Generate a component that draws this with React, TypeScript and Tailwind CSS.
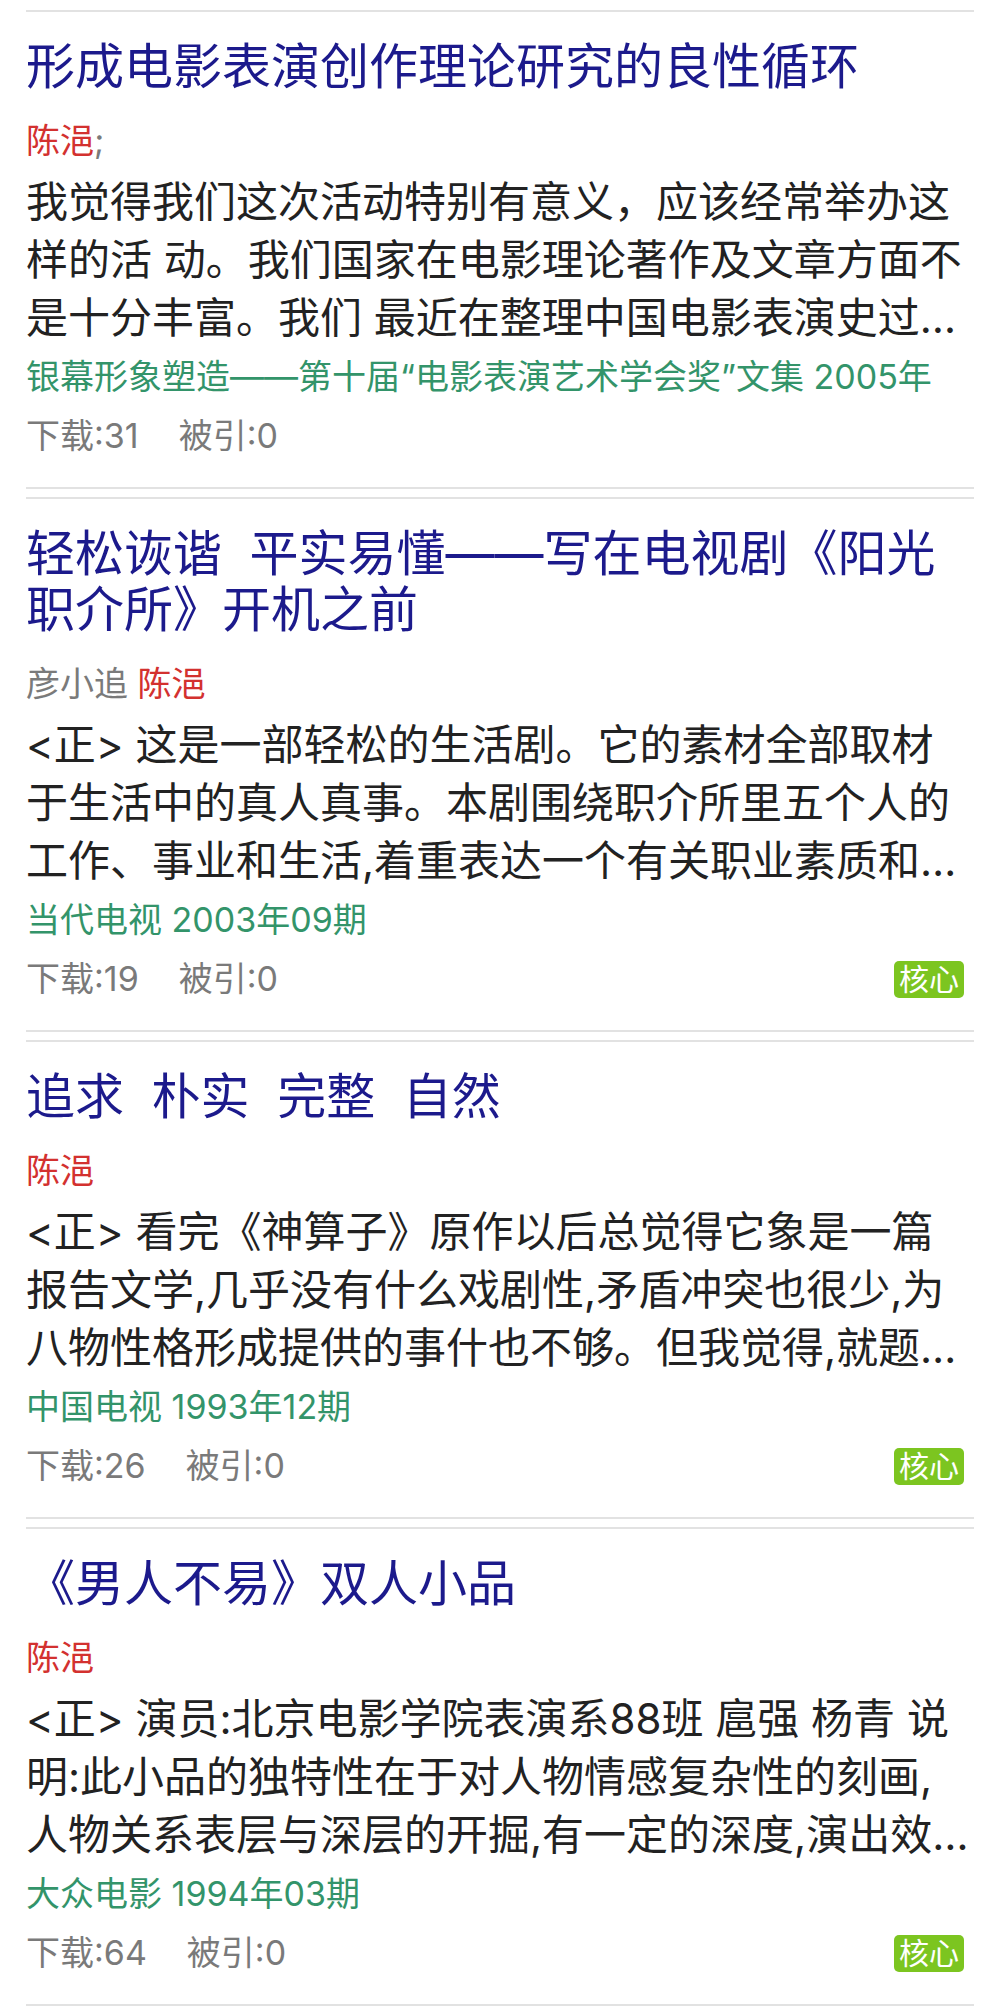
type Author = { name: string; highlight?: boolean };

interface Paper {
  title: string;
  authors: Author[];
  authorSuffix?: string;
  summary: string;
  source: string;
  downloads: number;
  cited: number;
  core?: boolean;
}

const papers: Paper[] = [
  {
    title: "形成电影表演创作理论研究的良性循环",
    authors: [{ name: "陈浥", highlight: true }],
    authorSuffix: ";",
    summary:
      "我觉得我们这次活动特别有意义，应该经常举办这样的活 动。我们国家在电影理论著作及文章方面不是十分丰富。我们 最近在整理中国电影表演史过程中，深感理论研究的重要性和迫切性。",
    source: "银幕形象塑造——第十届“电影表演艺术学会奖”文集 2005年",
    downloads: 31,
    cited: 0,
  },
  {
    title: "轻松诙谐\u00a0\u00a0平实易懂——写在电视剧《阳光职介所》开机之前",
    authors: [{ name: "彦小追" }, { name: "陈浥", highlight: true }],
    summary:
      "<正> 这是一部轻松的生活剧。它的素材全部取材于生活中的真人真事。本剧围绕职介所里五个人的工作、事业和生活,着重表达一个有关职业素质和职业道德的主题。",
    source: "当代电视 2003年09期",
    downloads: 19,
    cited: 0,
    core: true,
  },
  {
    title: "追求\u00a0\u00a0朴实\u00a0\u00a0完整\u00a0\u00a0自然",
    authors: [{ name: "陈浥", highlight: true }],
    summary:
      "<正> 看完《神算子》原作以后总觉得它象是一篇报告文学,几乎没有什么戏剧性,矛盾冲突也很少,为八物性格形成提供的事什也不够。但我觉得,就题材本身而言,它还是很有意义的。",
    source: "中国电视 1993年12期",
    downloads: 26,
    cited: 0,
    core: true,
  },
  {
    title: "《男人不易》双人小品",
    authors: [{ name: "陈浥", highlight: true }],
    summary:
      "<正> 演员:北京电影学院表演系88班 扈强 杨青 说明:此小品的独特性在于对人物情感复杂性的刻画,人物关系表层与深层的开掘,有一定的深度,演出效果很好。",
    source: "大众电影 1994年03期",
    downloads: 64,
    cited: 0,
    core: true,
  },
];

function PaperItem({ paper }: { paper: Paper }) {
  return (
    <div className="border-y-2 border-[#e2e2e2] bg-white pt-[27px] pb-[27px]">
      <h2 className="text-[49px] leading-[56px] font-normal text-[#1c1a8c]">{paper.title}</h2>

      <p className="mt-[22px] text-[34px] leading-[48px] text-[#7a7a7a]">
        {paper.authors.map((a, i) => (
          <span key={i}>
            {i > 0 && " "}
            <span className={a.highlight ? "text-[#d3312f]" : ""}>{a.name}</span>
          </span>
        ))}
        {paper.authorSuffix}
      </p>

      <p className="mt-[8px] line-clamp-3 pr-[4px] text-[42px] leading-[58px] text-[#222222]">
        {paper.summary}
      </p>

      <p className="mt-[6px] truncate text-[34px] leading-[48px] text-[#33946a]">{paper.source}</p>

      <div className="mt-[11px] flex items-center justify-between pr-[10px]">
        <div className="flex gap-[40px] text-[34px] leading-[48px] text-[#7a7a7a]">
          <span>下载:{paper.downloads}</span>
          <span>被引:{paper.cited}</span>
        </div>
        {paper.core && (
          <span className="rounded-[5px] bg-[#7cc520] px-[5px] text-[30px] leading-[37px] text-white">
            核心
          </span>
        )}
      </div>
    </div>
  );
}

export default function App() {
  return (
    <div
      className="min-h-[2010px] w-[1000px] bg-white px-[26px] pt-[10px]"
      style={{ fontFamily: 'Inter, "Noto Sans CJK SC", sans-serif' }}
    >
      <div className="flex flex-col gap-[8px]">
        {papers.map((p, i) => (
          <PaperItem key={i} paper={p} />
        ))}
      </div>
    </div>
  );
}
